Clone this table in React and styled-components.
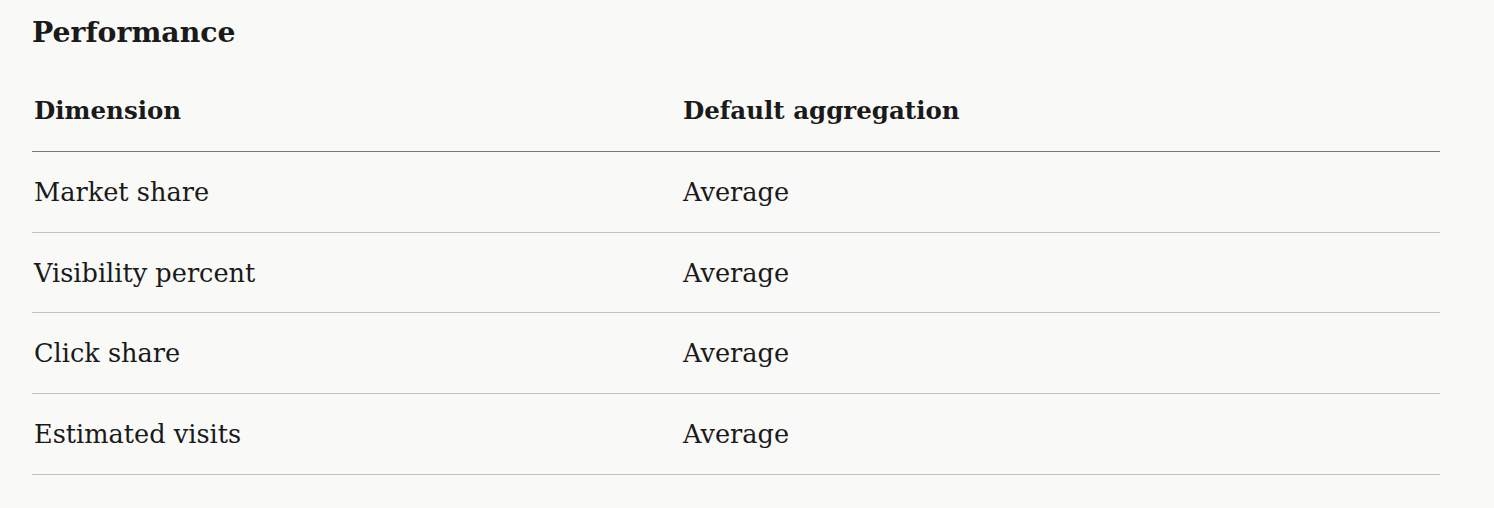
import React from 'react';
import styled, { createGlobalStyle } from 'styled-components';

const GlobalStyle = createGlobalStyle`
    body {
        margin: 0;
        background: #f9f9f7;
        font-family: "DejaVu Serif", "Liberation Serif", serif;
        color: #1a1a1a;
    }
`;

const rows = [
    { dimension: 'Market share', aggregation: 'Average' },
    { dimension: 'Visibility percent', aggregation: 'Average' },
    { dimension: 'Click share', aggregation: 'Average' },
    { dimension: 'Estimated visits', aggregation: 'Average' },
];

const Section = styled.section`
    width: 1408px;
    padding-left: 32px;
`;

const Title = styled.h2`
    margin: 0 0 6px;
    font-size: 28.3px;
    font-weight: 700;
    line-height: 64px;
`;

const Table = styled.table`
    width: 100%;
    border-collapse: collapse;
    table-layout: fixed;
`;

const HeadCell = styled.th`
    height: 81px;
    padding: 0 2px;
    text-align: left;
    font-size: 24.5px;
    font-weight: 700;
    border-bottom: 1px solid #7a7a7a;
    width: ${({ wide }) => wide ? '645px' : 'auto'};
`;

const Cell = styled.td`
    height: 79.7px;
    padding: 0 2px;
    font-size: 25.6px;
    border-bottom: 1px solid #c2c2c2;
`;

const App = () => {
    return (
        <>
            <GlobalStyle />
            <Section>
                <Title>Performance</Title>
                <Table>
                    <thead>
                        <tr>
                            <HeadCell wide>Dimension</HeadCell>
                            <HeadCell>Default aggregation</HeadCell>
                        </tr>
                    </thead>
                    <tbody>
                        {rows.map(row => (
                            <tr key={row.dimension}>
                                <Cell>{row.dimension}</Cell>
                                <Cell>{row.aggregation}</Cell>
                            </tr>
                        ))}
                    </tbody>
                </Table>
            </Section>
        </>
    );
};

export default App;
